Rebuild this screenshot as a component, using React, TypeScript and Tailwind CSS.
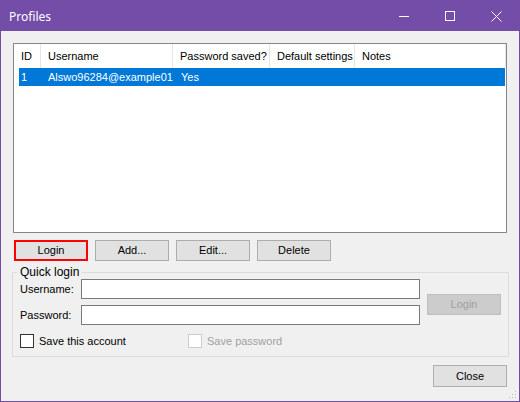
import React from 'react';

const columns = [
    { label: 'ID', width: 'w-[27px]' },
    { label: 'Username', width: 'w-[132px]' },
    { label: 'Password saved?', width: 'w-[97px]' },
    { label: 'Default settings', width: 'w-[85px]' },
    { label: 'Notes', width: 'flex-1' },
];

const WinButton: React.FC<{ label: string; focused?: boolean; disabled?: boolean; className?: string }> = ({ label, focused, disabled, className }) => (
    <div
        className={
            'w-[74px] h-[21px] flex items-center justify-center ' +
            (focused
                ? 'border-2 border-[#ff0000] bg-[#e1e1e1] text-black '
                : disabled
                ? 'border border-[#bfbfbf] bg-[#cccccc] text-[#a0a0a0] '
                : 'border border-[#adadad] bg-[#e1e1e1] text-black ') +
            (className || '')
        }
    >
        {label}
    </div>
);

const Checkbox: React.FC<{ label: string; disabled?: boolean }> = ({ label, disabled }) => (
    <div className="flex items-center gap-[5px]">
        <div className={'w-[14px] h-[14px] bg-white border ' + (disabled ? 'border-[#cccccc]' : 'border-[#333333]')} />
        <span className={disabled ? 'text-[#a0a0a0]' : 'text-black'}>{label}</span>
    </div>
);

const App: React.FC = () => {
    return (
        <div
            className="relative w-[520px] h-[402px] border border-[#744da9] bg-[#f0f0f0] flex flex-col text-[11px] leading-[13px] text-black"
            style={{ fontFamily: '"Liberation Sans", Arial, sans-serif' }}
        >
            {/* Title bar */}
            <div className="h-[30px] bg-[#744da9] flex items-center text-white shrink-0">
                <span className="pl-[8px] text-[12px] flex-1" style={{ fontFamily: '"Noto Sans", "Open Sans", sans-serif' }}>Profiles</span>
                <div className="w-[46px] h-full flex items-center justify-center">
                    <svg width="10" height="10" viewBox="0 0 10 10"><line x1="0" y1="5.5" x2="10" y2="5.5" stroke="white" strokeWidth="1" /></svg>
                </div>
                <div className="w-[46px] h-full flex items-center justify-center">
                    <svg width="10" height="10" viewBox="0 0 10 10"><rect x="0.5" y="0.5" width="9" height="9" fill="none" stroke="white" strokeWidth="1" /></svg>
                </div>
                <div className="w-[46px] h-full flex items-center justify-center">
                    <svg width="11" height="11" viewBox="0 0 11 11"><path d="M0.5 0.5 L10.5 10.5 M10.5 0.5 L0.5 10.5" stroke="white" strokeWidth="1" /></svg>
                </div>
            </div>

            {/* List view */}
            <div className="ml-[12px] mt-[12px] w-[494px] h-[190px] border border-[#828790] bg-white flex flex-col">
                <div className="h-[24px] flex">
                    {columns.map((c) => (
                        <div key={c.label} className={c.width + ' h-full flex items-center pl-[7px] border-r border-[#e5e5e5] whitespace-nowrap'}>
                            {c.label}
                        </div>
                    ))}
                </div>
                <div className="ml-[5px] mr-px h-[18px] bg-[#0078d7] text-white flex items-center">
                    <div className="w-[22px] pl-[2px]">1</div>
                    <div className="w-[132px] pl-[7px]">Alswo96284@example01</div>
                    <div className="w-[97px] pl-[8px]">Yes</div>
                </div>
            </div>

            {/* Action buttons */}
            <div className="ml-[13px] mt-[7px] flex gap-[7px]">
                <WinButton label="Login" focused />
                <WinButton label="Add..." />
                <WinButton label="Edit..." />
                <WinButton label="Delete" />
            </div>

            {/* Quick login group */}
            <fieldset className="ml-[11px] mt-[5px] w-[496px] border border-[#dcdcdc] px-[7px] pb-[8px]">
                <legend className="-ml-[3px] px-[3px] text-[12px] leading-[13px]">Quick login</legend>
                <div className="flex">
                    <div className="flex flex-col gap-[6px]">
                        <div className="flex items-center">
                            <span className="w-[61px]">Username:</span>
                            <div className="w-[339px] h-[20px] bg-white border border-[#7a7a7a]" />
                        </div>
                        <div className="flex items-center">
                            <span className="w-[61px]">Password:</span>
                            <div className="w-[339px] h-[20px] bg-white border border-[#7a7a7a]" />
                        </div>
                    </div>
                    <WinButton label="Login" disabled className="ml-[7px] mt-[15px]" />
                </div>
                <div className="mt-[9px] flex">
                    <div className="w-[168px]">
                        <Checkbox label="Save this account" />
                    </div>
                    <Checkbox label="Save password" disabled />
                </div>
            </fieldset>

            {/* Close */}
            <div className="mt-[8px] mr-[12px] flex justify-end">
                <WinButton label="Close" className="h-[22px]" />
            </div>

            {/* Resize grip */}
            <svg className="absolute right-[2px] bottom-[2px]" width="10" height="10" viewBox="0 0 10 10">
                <rect x="8" y="2" width="1" height="1" fill="#b8b8b8" />
                <rect x="5" y="5" width="1" height="1" fill="#b8b8b8" />
                <rect x="8" y="5" width="1" height="1" fill="#b8b8b8" />
                <rect x="2" y="8" width="1" height="1" fill="#b8b8b8" />
                <rect x="5" y="8" width="1" height="1" fill="#b8b8b8" />
                <rect x="8" y="8" width="1" height="1" fill="#b8b8b8" />
            </svg>
        </div>
    );
};

export default App;
